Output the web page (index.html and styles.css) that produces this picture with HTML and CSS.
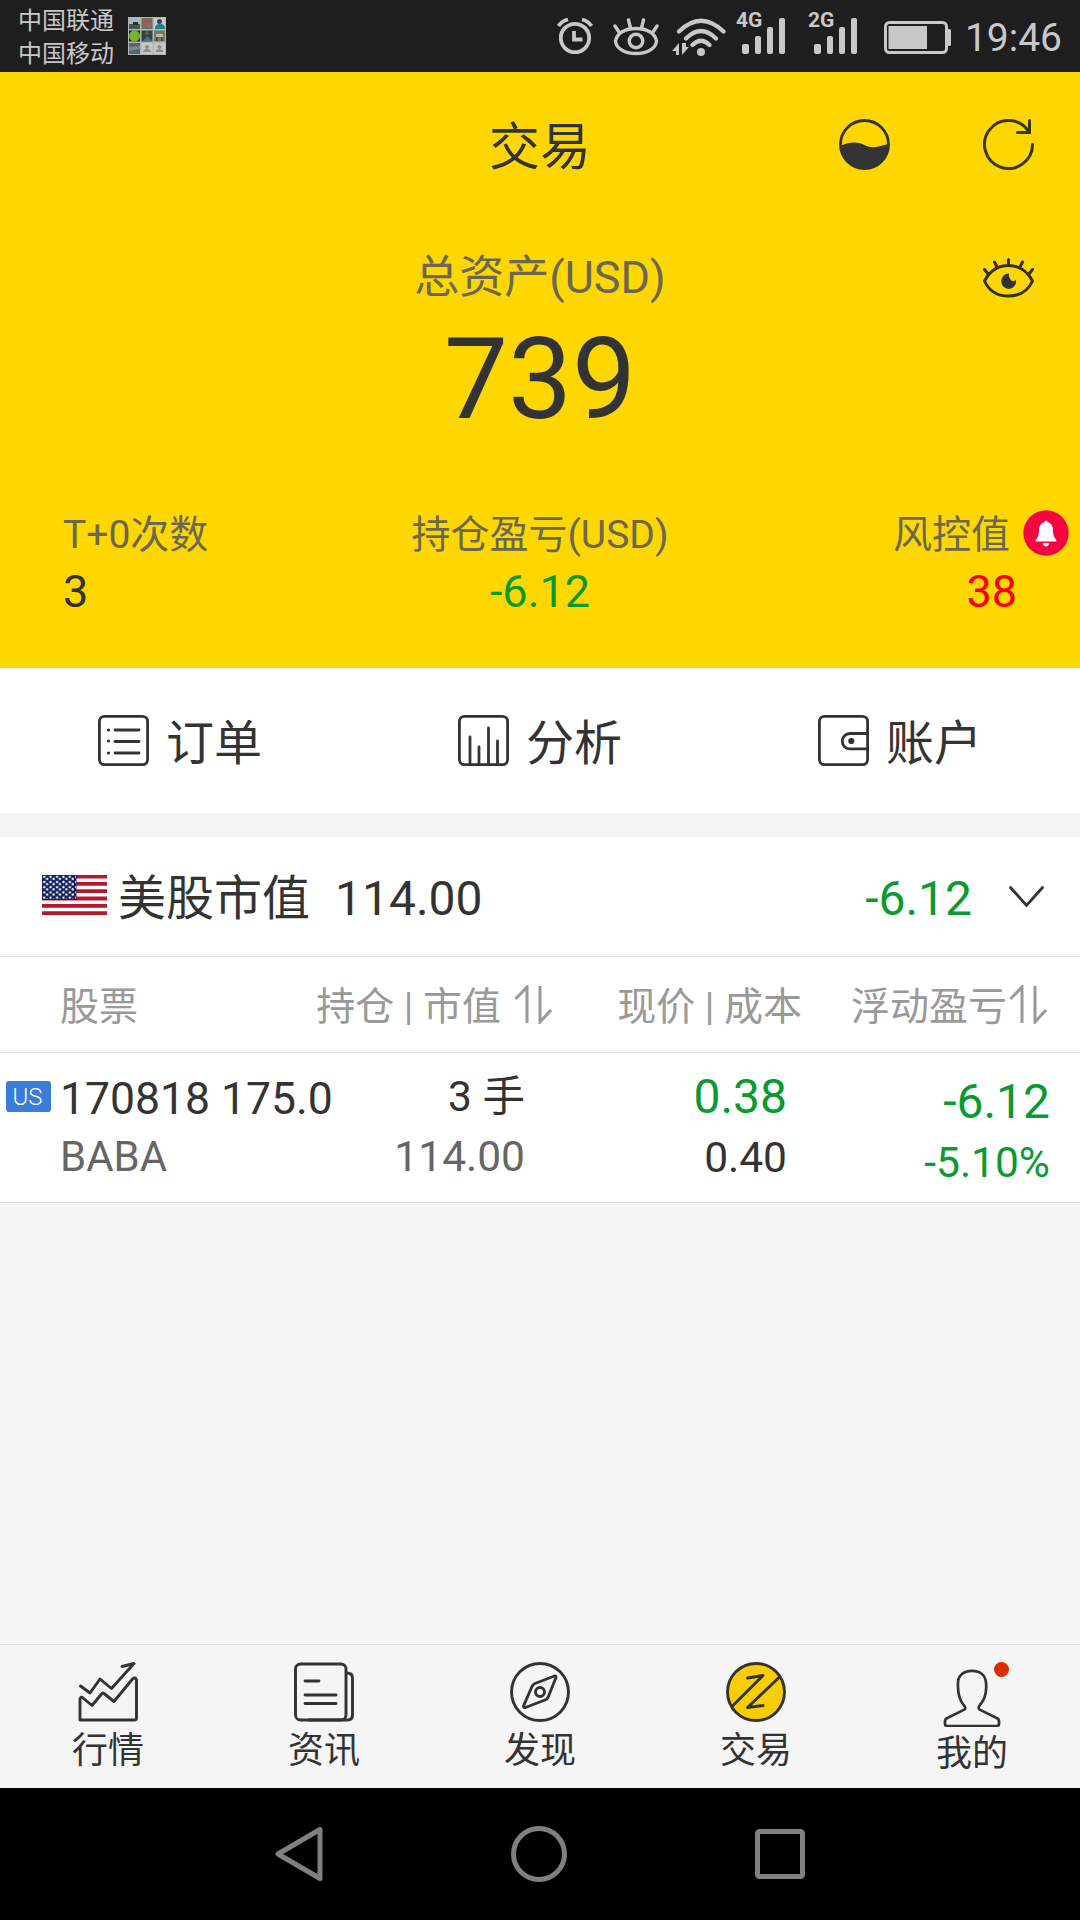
FILE: index.html
```html
<!DOCTYPE html>
<html lang="zh-CN">
<head>
    <meta charset="UTF-8">
    <meta name="viewport" content="width=device-width, initial-scale=1.0">
    <title>交易</title>
    <link rel="stylesheet" href="styles.css">
</head>
<body>
<div class="phone">
    <!-- System status bar -->
    <div class="statusbar">
        <div class="carriers">
            <div>中国联通</div>
            <div>中国移动</div>
        </div>
        <svg class="thumb" width="38" height="38" viewBox="0 0 38 38">
            <rect width="38" height="38" fill="#b4b5b4"/>
            <rect x="1" y="1" width="11" height="11" fill="#a9b9bd"/><path d="M1 7h11v5H1z" fill="#4b5650"/><path d="M5 5h5v3H5z" fill="#27312d"/>
            <rect x="13.500" y="1" width="11" height="11" fill="#5f7a58"/><circle cx="17" cy="5" r="2.500" fill="#b54c63"/><circle cx="21" cy="8" r="2.500" fill="#c3506b"/><circle cx="22" cy="3" r="1.500" fill="#b54c63"/>
            <rect x="26" y="1" width="11" height="11" fill="#c4cccc"/><path d="M27 12c0-4 2-5 5-5s5 1 5 5z" fill="#188392"/><circle cx="31.500" cy="4.500" r="2.500" fill="#39445a"/>
            <rect x="1" y="13.500" width="11" height="11" fill="#1f2a1c"/><circle cx="6.500" cy="19" r="5.500" fill="#74b52b"/>
            <rect x="13.500" y="13.500" width="11" height="11" fill="#27484a"/><circle cx="19" cy="16" r="2" fill="#80504a"/><path d="M15 24l4-5 5 5z" fill="#3e7474"/>
            <rect x="26" y="13.500" width="11" height="11" fill="#77776c"/><path d="M28 17h7v3h-7z" fill="#bdb9a8"/><path d="M28 20h2v4h-2zM33 20h2v4h-2z" fill="#4e4e44"/>
            <rect x="1" y="26" width="11" height="11" fill="#56646a"/><path d="M1 30l11-1v3L1 34z" fill="#7c898d"/>
            <g fill="#c6c6c6"><rect x="13.500" y="26" width="11" height="11"/><rect x="26" y="26" width="11" height="11"/></g>
            <g fill="#8d8d8d"><circle cx="19" cy="30" r="2"/><path d="M15 35c0-2 2-3 4-3s4 1 4 3z"/><circle cx="31.500" cy="30" r="2"/><path d="M27.500 35c0-2 2-3 4-3s4 1 4 3z"/></g>
        </svg>
        <div class="status-icons">
            <svg class="alarm" width="36" height="38" viewBox="0 0 36 38" fill="none" stroke="#c8c8c8" stroke-width="3.800">
                <circle cx="18" cy="21" r="14.200"/>
                <path d="M17 14v8.500h8.500M1.500 9Q5 4 11 2.500M34.500 9Q31 4 25 2.500"/>
            </svg>
            <svg class="eye-mode" width="46" height="38" viewBox="0 0 46 38" fill="none" stroke="#c8c8c8" stroke-width="3.400" stroke-linecap="round">
                <path d="M2.500 23C4 15 12 10.500 23 10.500S42 15 43.500 23C43 30 35 35.500 23 35.500S3 30 2.500 23z"/>
                <circle cx="23" cy="23" r="6.800"/>
                <path d="M2 8l4 6M44 8l-4 6M15.500 2l2 8M30.500 2l-2 8"/>
            </svg>
            <svg class="wifi" width="54" height="38" viewBox="0 0 54 38" fill="none" stroke="#c8c8c8" stroke-width="4.200" stroke-linecap="round">
                <path d="M7 13.500Q29-8 51.500 13.500M14 20.500Q29 5.500 44 20.500M20.500 27Q29 18.500 37.500 27"/>
                <circle cx="29" cy="34" r="4" fill="#c8c8c8" stroke="none"/>
                <path d="M0 33l7-8v12H4v-4zM10 25v12l7-8h-3v-4z" fill="#c8c8c8" stroke="none"/>
            </svg>
            <div class="signal">
                <span class="net">4G</span>
                <i class="bar b1"></i><i class="bar b2"></i><i class="bar b3"></i><i class="bar b4"></i>
            </div>
            <div class="signal">
                <span class="net">2G</span>
                <i class="bar b1"></i><i class="bar b2"></i><i class="bar b3"></i><i class="bar b4"></i>
            </div>
            <svg class="battery" width="67" height="33" viewBox="0 0 67 33">
                <rect x="1.500" y="1.500" width="61" height="30" rx="4" fill="none" stroke="#c8c8c8" stroke-width="3"/>
                <path d="M4.500 5H43v23H4.500zM64 8h1.500q1.500 0 1.500 1.500v14q0 1.500-1.500 1.500H64z" fill="#c8c8c8"/>
            </svg>
            <span class="time">19:46</span>
        </div>
    </div>

    <!-- Account summary -->
    <div class="summary">
        <div class="topbar">
            <div class="side"></div>
            <h1 class="title">交易</h1>
            <div class="side side-right">
                <svg width="51" height="51" viewBox="0 0 51 51">
                    <circle cx="25.500" cy="25.500" r="24" fill="none" stroke="#333" stroke-width="2.800"/>
                    <path d="M1.500 27C6 24.500 15 22 22 24.500C28 27 31 29 37 28C42 27 45 26 49.500 25A24 24 0 0 1 1.500 27z" fill="#333"/>
                </svg>
                <svg width="51" height="51" viewBox="0 0 51 51" fill="none" stroke="#3a3717" stroke-width="3" stroke-linecap="round">
                    <path d="M49.500 25.500A24 24 0 1 1 46 13M46.500 1.500V13.500H34.500"/>
                </svg>
            </div>
        </div>
        <div class="asset-row">
            <div class="side"></div>
            <div class="asset-label">总资产(USD)</div>
            <div class="side side-right">
                <svg width="51" height="40" viewBox="0 0 51 40" fill="none" stroke="#333018" stroke-width="3" stroke-linecap="round">
                    <path d="M1.500 23C7 12.500 16 7.500 25.500 7.500S44 12.500 49.500 23C45 33 36 38 25.500 38S6 33 1.500 23zM25.500 7V1.500M14 9l-2.500-5M37 9l2.500-5M5 16l-3.500-4.500M46 16l3.500-4.500"/>
                    <path d="M26 15.500A7.500 7.700 0 1 0 33 21.500Q31 24 28.500 22.500Q25.500 20 26 15.500z" fill="#333" stroke="none"/>
                </svg>
            </div>
        </div>
        <div class="amount">739</div>
        <div class="stats">
            <div class="stat">
                <div class="stat-label">T+0次数</div>
                <div class="stat-value">3</div>
            </div>
            <div class="stat center">
                <div class="stat-label">持仓盈亏(USD)</div>
                <div class="stat-value green">-6.12</div>
            </div>
            <div class="stat right">
                <div class="stat-label risk">风控值
                    <svg class="bell" width="46" height="46" viewBox="0 0 46 46">
                        <circle cx="23" cy="23" r="22.700" fill="#f5053f"/>
                        <path d="M23 10.500c1.200 0 1.600.800 1.700 1.800 3.600 1 5.300 4 5.300 7.500 0 5 .800 7.500 3.300 10v1.700H12.700v-1.700c2.500-2.500 3.300-5 3.300-10 0-3.500 1.700-6.500 5.300-7.500.100-1 .500-1.800 1.700-1.800zM19.700 33h6.600q-.800 3.500-3.300 3.500T19.700 33z" fill="#fff"/>
                    </svg>
                </div>
                <div class="stat-value red">38</div>
            </div>
        </div>
    </div>

    <div class="actions">
        <div class="action">
            <svg width="51" height="51" viewBox="0 0 51 51" fill="none" stroke="#333" stroke-width="2.800" stroke-linecap="round">
                <rect x="1.400" y="1.400" width="48.200" height="48.200" rx="5"/>
                <path d="M17 15h24M17 26.500h24M17 38h24"/>
                <path d="M10.500 15h.010M10.500 26h.010M10.500 38h.010" stroke-width="3.200"/>
            </svg>
            <span>订单</span>
        </div>
        <div class="action">
            <svg width="51" height="51" viewBox="0 0 51 51" fill="none" stroke="#333" stroke-width="2.800" stroke-linecap="round">
                <rect x="1.400" y="1.400" width="48.200" height="48.200" rx="5"/>
                <path d="M12 22v28M21 32v18M30.500 13v37M39.500 26v24"/>
            </svg>
            <span>分析</span>
        </div>
        <div class="action">
            <svg width="51" height="51" viewBox="0 0 51 51" fill="none" stroke="#333" stroke-width="2.800">
                <rect x="1.400" y="1.400" width="48.200" height="48.200" rx="5"/>
                <path d="M49.500 18.500H32a7.700 7.700 0 0 0 0 15.400h17.500"/>
                <circle cx="33.300" cy="26" r="3.100" fill="#333" stroke="none"/>
            </svg>
            <span>账户</span>
        </div>
    </div>

    <!-- Holdings -->
    <div class="holdings">
        <div class="market">
            <svg class="flag" width="65" height="42" viewBox="0 0 65 42">
                <defs>
                    <pattern id="stars" width="6.400" height="5.200" patternUnits="userSpaceOnUse">
                        <circle cx="2.200" cy="1.800" r="1.200" fill="#fff"/>
                        <circle cx="5.200" cy="4" r="1.200" fill="#fff"/>
                    </pattern>
                </defs>
                <rect width="65" height="40" fill="#fff"/>
                <path d="M0 1.600h65M0 8.900h65M0 16.200h65M0 23.500h65M0 30.800h65M0 38.200h65" stroke="#b5172b" stroke-width="3.800"/>
                <rect width="34.500" height="25" fill="#14225c"/>
                <rect width="34" height="24" fill="url(#stars)"/>
            </svg>
            <span class="market-name">美股市值</span>
            <span class="market-value">114.00</span>
            <span class="market-change green">-6.12</span>
            <svg class="chevron" width="35" height="22" viewBox="0 0 35 22" fill="none" stroke="#333" stroke-width="2.800" stroke-linecap="round">
                <path d="M1.500 1.500l16 18 16-18"/>
            </svg>
        </div>
        <div class="table-head">
            <div>股票</div>
            <div>持仓 | 市值
                <svg class="sort" width="38" height="39" viewBox="0 0 38 39"><path d="M1.500 14L13 2v36M26 1v36l11-12" fill="none" stroke="#999" stroke-width="3"/></svg>
            </div>
            <div>现价 | 成本</div>
            <div>浮动盈亏<svg class="sort tight" width="38" height="39" viewBox="0 0 38 39"><path d="M1.500 14L13 2v36M26 1v36l11-12" fill="none" stroke="#999" stroke-width="3"/></svg></div>
        </div>
        <div class="table-row">
            <div class="cell stock">
                <span class="tag">US</span>
                <div class="stock-name">
                    <div class="name">170818 175.0</div>
                    <div class="sub">BABA</div>
                </div>
            </div>
            <div class="cell qty">
                <div>3 手</div>
                <div class="sub">114.00</div>
            </div>
            <div class="cell price">
                <div class="big green">0.38</div>
                <div>0.40</div>
            </div>
            <div class="cell profit green">
                <div class="big">-6.12</div>
                <div>-5.10%</div>
            </div>
        </div>
    </div>

    <!-- Tabs -->
    <div class="tabbar">
        <div class="tab">
            <svg width="60" height="60" viewBox="0 0 60 60" fill="none" stroke="#333" stroke-width="2.900" stroke-linecap="round" stroke-linejoin="round">
                <path d="M2.500 24l9.500 7L22 17l11.500 9.500L56 1.500 44 4.500"/>
                <path d="M2 58V37q1-3 3-1l9 7.500L23.500 32q1-1.500 2.500-.500L36 39.500 54.500 17q3-2.500 4 1v38q0 2-2 2H4q-2 0-2-2z"/>
            </svg>
            <span>行情</span>
        </div>
        <div class="tab">
            <svg width="60" height="60" viewBox="0 0 60 60" fill="none" stroke="#333" stroke-width="2.900" stroke-linecap="round">
                <rect x="1.500" y="2" width="50.500" height="56" rx="5"/>
                <path d="M53 11q5.500 0 5.500 5v37q0 5-5 5H15M11 19h14M11 33h31M11 41.500h31"/>
            </svg>
            <span>资讯</span>
        </div>
        <div class="tab">
            <svg width="60" height="60" viewBox="0 0 60 60" fill="none" stroke="#333" stroke-width="2.900" stroke-linejoin="round">
                <circle cx="30" cy="30" r="28.500"/>
                <path d="M44.500 14L25 21.500q-2 1-3 3L13.500 44q0 2 2 1.500L35 38q2-.500 3-2.500L46 15.500q0-2-1.500-1.500z"/>
                <circle cx="30" cy="30" r="4.500"/>
            </svg>
            <span>发现</span>
        </div>
        <div class="tab">
            <svg width="60" height="60" viewBox="0 0 60 60" fill="none" stroke="#333" stroke-width="2.900" stroke-linecap="round" stroke-linejoin="round">
                <circle cx="30" cy="30" r="28.500" fill="#facd00"/>
                <path d="M21.500 16L37 13.500 6 44.500M53.500 15L21.500 45.500 37 43.500"/>
            </svg>
            <span>交易</span>
        </div>
        <div class="tab mine">
            <svg width="60" height="60" viewBox="0 0 60 60" fill="none" stroke="#333" stroke-width="2.800" stroke-linejoin="round">
                <path d="M30 2C21 2 15.500 7 15.500 14.500C15 25 17 32 21.500 37.500C23.500 39.500 23.500 41 22 42L4 51Q2 52 2 55v1.500Q2 59 4.500 59h51Q58 59 58 56.500V55Q58 52 56 51L38 42C36.500 41 36.500 39.500 38 37.500C43 32 45.500 25 44.500 14.500C44 7 39 2 30 2z"/>
            </svg>
            <i class="dot"></i>
            <span>我的</span>
        </div>
    </div>

    <!-- Android buttons -->
    <div class="navbar">
        <svg width="48" height="56" viewBox="0 0 48 56"><path d="M45 3.500v49L3 28z" fill="none" stroke="#808080" stroke-width="5" stroke-linejoin="round"/></svg>
        <svg width="56" height="56" viewBox="0 0 56 56"><circle cx="28" cy="28" r="25.500" fill="none" stroke="#808080" stroke-width="5"/></svg>
        <svg width="50" height="50" viewBox="0 0 50 50"><rect x="2.500" y="2.500" width="45" height="45" rx="2" fill="none" stroke="#808080" stroke-width="5"/></svg>
    </div>
</div>
</body>
</html>
```
FILE: styles.css
```css
* {
  box-sizing: border-box;
}
body {
  margin: 0;
  font-family: Roboto, "Noto Sans CJK SC", sans-serif;
  color: #333;
  background: #f5f5f5;
}
svg {
  display: block;
  flex: none;
}
.phone {
  width: 1080px;
  height: 1920px;
  display: flex;
  flex-direction: column;
  overflow: hidden;
}
.green {
  color: #0a9a31;
}
.red {
  color: #f60000;
}

/* status bar */
.statusbar {
  height: 72px;
  flex: none;
  display: flex;
  padding: 0 18px;
  background: #1e1e1e;
  color: #c8c8c8;
}
.carriers {
  font-size: 24px;
  line-height: 33px;
  padding-top: 5px;
  width: 96px;
  white-space: nowrap;
}
.thumb {
  margin: 17px 0 0 14px;
}
.status-icons {
  margin-left: auto;
  display: flex;
  align-items: flex-start;
}
.alarm {
  margin: 17px 20px 0 0;
}
.eye-mode {
  margin: 18px 13px 0 0;
}
.wifi {
  margin: 18px 16px 0 0;
}
.signal {
  position: relative;
  width: 43px;
  height: 54px;
  margin-right: 29px;
  display: flex;
  align-items: flex-end;
  justify-content: space-between;
}
.net {
  position: absolute;
  left: -6px;
  top: 8px;
  font-size: 21px;
  line-height: 24px;
  font-weight: bold;
}
.bar {
  width: 6px;
  border-radius: 2px;
  background: #c8c8c8;
}
.b1 {
  width: 7px;
  height: 10px;
}
.b2 {
  height: 18px;
}
.b3 {
  height: 27px;
}
.b4 {
  height: 36px;
}
.battery {
  margin: 21px 14px 0 -2px;
}
.time {
  font-size: 39px;
  line-height: 48px;
  padding-top: 14px;
}

/* summary */
.summary {
  height: 596px;
  flex: none;
  background: #ffd700;
}
.topbar {
  height: 145px;
  display: flex;
  align-items: center;
  padding: 0 46px;
}
.side {
  flex: 1;
}
.side-right {
  display: flex;
  justify-content: flex-end;
  gap: 93px;
}
.title {
  margin: 0;
  padding-top: 7px;
  font-size: 51px;
  line-height: 60px;
  font-weight: normal;
}
.asset-row {
  height: 56px;
  margin-top: 33px;
  padding: 0 46px;
  display: flex;
  align-items: center;
}
.asset-label {
  font-size: 45px;
  line-height: 56px;
  color: #6a6852;
}
.amount {
  margin-top: 16px;
  font-size: 114px;
  line-height: 114px;
  text-align: center;
}
.stats {
  margin-top: 74px;
  padding: 0 63px;
  display: flex;
}
.stat {
  flex: 1;
}
.stat-label {
  font-size: 39px;
  line-height: 50px;
  color: #6a6852;
  white-space: nowrap;
}
.stat-value {
  margin-top: 7px;
  font-size: 45px;
  line-height: 50px;
}
.center {
  text-align: center;
}
.right {
  text-align: right;
}
.risk {
  position: relative;
  padding-right: 7px;
}
.bell {
  position: absolute;
  right: -52px;
  top: 0;
}

/* shortcuts */
.actions {
  height: 145px;
  flex: none;
  display: flex;
  background: #fff;
}
.action {
  flex: 1;
  display: flex;
  align-items: center;
  justify-content: center;
  gap: 17px;
  font-size: 48px;
  line-height: 60px;
}
.action span {
  padding-top: 6px;
}

/* holdings */
.holdings {
  margin-top: 24px;
  background: #fff;
}
.market {
  height: 120px;
  display: flex;
  align-items: center;
  padding: 0 36px 0 42px;
  border-bottom: 1px solid #e0e0e0;
  font-size: 48px;
  line-height: 60px;
}
.flag {
  margin-top: -1px;
}
.market-name {
  margin-left: 11px;
  padding-top: 5px;
}
.market-value {
  margin-left: 25px;
  padding-top: 4px;
}
.market-change {
  margin-left: auto;
  padding-top: 4px;
}
.chevron {
  margin-left: 37px;
  margin-top: 1px;
}
.table-head {
  height: 96px;
  display: grid;
  grid-template-columns: 199px 353px 250px 245px;
  align-items: center;
  border-bottom: 1px solid #e0e0e0;
  font-size: 39px;
  line-height: 50px;
  color: #999;
}
.table-head div {
  display: flex;
  justify-content: flex-end;
  padding-top: 5px;
}
.table-head div:first-child {
  justify-content: flex-start;
  padding-left: 60px;
}
.sort {
  margin-left: 13px;
  margin-top: 3px;
}
.tight {
  margin-left: 2px;
}
.table-row {
  height: 150px;
  display: grid;
  grid-template-columns: 340px 185px 262px 263px;
  border-bottom: 1px solid #e0e0e0;
  font-size: 42.5px;
  line-height: 52px;
}
.cell {
  text-align: right;
  padding-top: 18px;
}
.stock {
  display: flex;
  text-align: left;
  padding: 20px 0 0 6px;
}
.tag {
  width: 45px;
  height: 31px;
  margin-top: 8px;
  border-radius: 3px;
  background: #397cd9;
  color: #fff;
  font-size: 24px;
  font-weight: 300;
  line-height: 32px;
  text-align: center;
  padding-right: 2px;
}
.stock-name {
  margin-left: 9px;
}
.name {
  font-size: 44.5px;
  white-space: nowrap;
}
.sub {
  color: #666;
}
.stock .sub {
  margin-top: 6px;
  font-size: 42px;
}
.qty .sub {
  margin-top: 8px;
}
.big {
  font-size: 48px;
  margin-bottom: 9px;
}
.profit {
  padding-top: 23px;
}

/* bottom tabs */
.tabbar {
  height: 144px;
  flex: none;
  margin-top: auto;
  display: flex;
  border-top: 1px solid #d9d9d9;
}
.tab {
  flex: 1;
  position: relative;
  display: flex;
  flex-direction: column;
  align-items: center;
  padding-top: 17px;
  font-size: 36px;
  line-height: 44px;
}
.tab span {
  margin-top: 7px;
}
.mine {
  padding-top: 24px;
}
.mine svg {
  width: 58px;
  height: 58px;
}
.mine span {
  margin-top: 5px;
}
.dot {
  position: absolute;
  left: 130px;
  top: 17px;
  width: 15px;
  height: 15px;
  border-radius: 50%;
  background: #dd2c00;
}

.navbar {
  height: 132px;
  flex: none;
  display: flex;
  align-items: center;
  justify-content: space-between;
  padding: 0 275px;
  background: #000;
}
```
